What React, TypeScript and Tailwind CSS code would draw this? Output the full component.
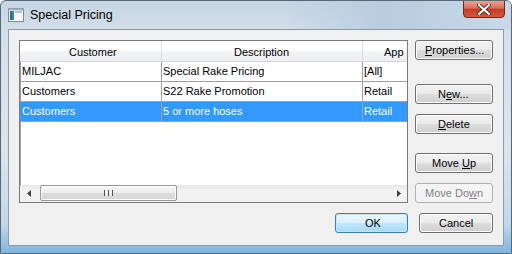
import React from "react";

type BtnProps = {
  label: string;
  variant?: "normal" | "default" | "disabled";
  className?: string;
  pad?: string;
  acc?: string;
};

// accelerator underline, measured from the outer edge of the button
const accClass: Record<string, string> = {
  properties: "left-[10px] w-[7px]",
  new: "left-[31px] w-[6px]",
  delete: "left-[23px] w-[8px]",
  moveUp: "left-[47px] w-[8px]",
  moveDown: "left-[54px] w-[8px]",
};

function VistaButton({ label, variant = "normal", className = "", pad = "", acc }: BtnProps) {
  const look =
    variant === "default"
      ? "border-[#3c7fb1] bg-[linear-gradient(#eaf6fd_0%,#d9f0fc_50%,#bee6fd_51%,#a7d9f5_100%)] shadow-[inset_0_0_0_1px_#c4e5f6] text-black"
      : variant === "disabled"
        ? "border-[#adb2b5] bg-[#f4f4f4] text-[#838383]"
        : "border-[#707070] bg-[linear-gradient(#f2f2f2_0%,#ebebeb_50%,#dddddd_51%,#cfcfcf_100%)] shadow-[inset_0_0_0_1px_#fcfcfc] text-black";
  const line = variant === "disabled" ? "bg-[#838383]" : "bg-black";
  return (
    <div className={`relative ${className}`}>
      <div className={`h-[20px] leading-[18px] rounded-[3px] border text-[11px] whitespace-nowrap ${look} ${pad}`}>
        {label}
      </div>
      {acc && <div className={`absolute top-[15px] h-[1px] ${line} ${accClass[acc]}`} />}
    </div>
  );
}

const rows = [
  { customer: "MILJAC", description: "Special Rake Pricing", applies: "[All]", selected: false },
  { customer: "Customers", description: "S22 Rake Promotion", applies: "Retail", selected: false },
  { customer: "Customers", description: "5 or more hoses", applies: "Retail", selected: true },
];

export default function App() {
  return (
    <div
      className="w-[512px] h-[254px] overflow-hidden flex flex-col bg-[linear-gradient(#c6d5e3_0%,#d3dfea_12%,#dbe5ee_60%,#c3d8ea_88%,#7fb6e0_100%)] rounded-t-[6px] border border-[#5a6876]"
      style={{ fontFamily: '"Liberation Sans", Arial, sans-serif' }}
    >
      {/* title bar */}
      <div className="h-[28px] flex items-start bg-[linear-gradient(90deg,transparent_0%,transparent_55%,#b9cde0_75%,#c8d8e8_100%)]">
        <div className="flex items-center gap-[6px] pl-[7px] pt-[7px]">
          <svg width="16" height="14" viewBox="0 0 16 14">
            <rect x="0.5" y="0.5" width="15" height="13" fill="#f4f6f8" stroke="#7d8a96" />
            <rect x="2" y="3" width="4" height="9" fill="#3f8f7a" />
            <rect x="2" y="3" width="2" height="9" fill="#2f6a9a" />
            <rect x="7" y="3" width="7" height="2" fill="#b9c6d3" />
            <rect x="0.5" y="0.5" width="15" height="2" fill="#9fb3c6" />
          </svg>
          <span className="text-[12.5px] text-black leading-none">Special Pricing</span>
        </div>
        <div className="ml-auto mr-[6px] w-[42px] h-[18px] -mt-[1px] rounded-b-[4px] border border-[#6b2a22] bg-[linear-gradient(#e8a393_0%,#d8705a_45%,#c43d22_50%,#d2583a_100%)] flex items-center justify-center">
          <svg width="14" height="11" viewBox="0 0 14 11">
            <path d="M2 1 L12 10 M12 1 L2 10" stroke="#5b2419" strokeWidth="4" strokeLinecap="round" />
            <path d="M2 1 L12 10 M12 1 L2 10" stroke="#ffffff" strokeWidth="2.2" strokeLinecap="round" />
          </svg>
        </div>
      </div>

      <div className="flex-1 flex px-[7px] pb-[7px]">
        {/* client area */}
        <div className="flex-1 bg-[#f0f0f0] border border-[#8d9aa8] p-[10px] flex flex-col">
          <div className="flex">
            {/* list view */}
            <div className="w-[389px] h-[163px] border border-[#7a7a7a] shadow-[inset_1px_1px_0_#a0a0a0] bg-white flex flex-col overflow-hidden">
              <div className="flex-1 overflow-hidden">
                <div className="flex h-[21px] bg-[linear-gradient(#ffffff_0%,#ffffff_45%,#f3f4f6_55%,#eceef1_100%)] border-b border-[#d5d5d5] text-[11px] text-black">
                  <div className="w-[142px] shrink-0 border-r border-[#dcdcdc] flex items-center pl-[49px] pt-[2px]">Customer</div>
                  <div className="w-[201px] shrink-0 border-r border-[#dcdcdc] flex items-center pl-[72px] pt-[2px]">Description</div>
                  <div className="w-[44px] shrink-0 overflow-hidden whitespace-nowrap pl-[21px] flex items-center pt-[2px]">App</div>
                </div>
                {rows.map((r, i) => (
                  <div
                    key={i}
                    className={`flex h-[20px] border-b border-[#a0a0a0] text-[11px] ${r.selected ? "bg-[#3399ff] text-white" : "text-black"}`}
                  >
                    <div className="w-[142px] shrink-0 border-r border-[#a0a0a0] pl-[2px] flex items-center">{r.customer}</div>
                    <div className="w-[201px] shrink-0 border-r border-[#a0a0a0] pl-[1px] flex items-center">{r.description}</div>
                    <div className="w-[44px] shrink-0 pl-[1px] flex items-center">{r.applies}</div>
                  </div>
                ))}
              </div>
              {/* horizontal scrollbar */}
              <div className="h-[17px] flex bg-[linear-gradient(#e6e6e6_0%,#f2f2f2_30%,#f2f2f2_100%)] shrink-0">
                <div className="w-[17px] flex items-center justify-center">
                  <svg width="4" height="7" viewBox="0 0 4 7">
                    <path d="M4 0 L0 3.5 L4 7 Z" fill="#404040" />
                  </svg>
                </div>
                <div className="ml-[3px] w-[137px] h-[16px] rounded-[2px] border border-[#979797] bg-[linear-gradient(#f6f6f6_0%,#ececec_50%,#dcdcdc_51%,#d6d6d6_100%)] shadow-[inset_0_0_0_1px_#fdfdfd] flex items-center justify-center gap-[1px]">
                  <div className="w-[1px] h-[6px] bg-[#555]" />
                  <div className="w-[1px] h-[6px] bg-[#fff]" />
                  <div className="w-[1px] h-[6px] bg-[#555]" />
                  <div className="w-[1px] h-[6px] bg-[#fff]" />
                  <div className="w-[1px] h-[6px] bg-[#555]" />
                </div>
                <div className="flex-1" />
                <div className="w-[17px] flex items-center justify-center">
                  <svg width="4" height="7" viewBox="0 0 4 7">
                    <path d="M0 0 L4 3.5 L0 7 Z" fill="#404040" />
                  </svg>
                </div>
              </div>
            </div>

            {/* button column */}
            <div className="ml-[7px] w-[78px] flex flex-col">
              <VistaButton pad="pl-[9px]" label="Properties..." acc="properties" />
              <VistaButton className="mt-[24px]" pad="pl-[22px]" label="New..." acc="new" />
              <VistaButton className="mt-[10px]" pad="pl-[22px]" label="Delete" acc="delete" />
              <VistaButton className="mt-[19px]" pad="pl-[16px]" label="Move Up" acc="moveUp" />
              <VistaButton className="mt-[10px]" pad="pl-[9px]" variant="disabled" label="Move Down" acc="moveDown" />
            </div>
          </div>

          <div className="flex justify-end mt-[10px] gap-[11px]">
            <VistaButton variant="default" className="w-[73px]" pad="pl-[29px]" label="OK" />
            <VistaButton className="w-[74px]" pad="pl-[19px]" label="Cancel" />
          </div>
        </div>
      </div>
    </div>
  );
}
